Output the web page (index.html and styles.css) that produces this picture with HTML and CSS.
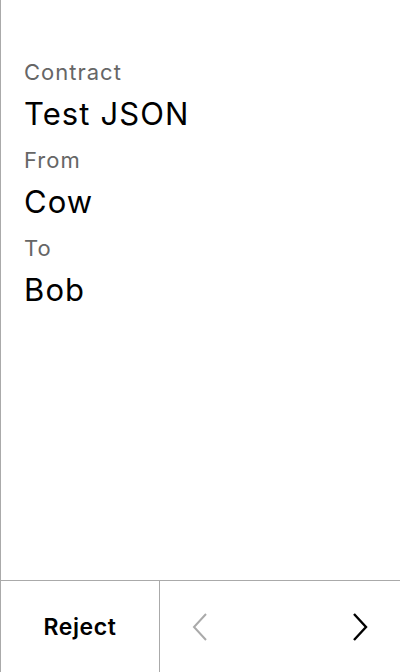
FILE: index.html
```html
<!DOCTYPE html>
<html>
<head>
<meta charset="utf-8">
<link rel="stylesheet" href="styles.css">
</head>
<body>
<div class="screen">
  <main class="details">
    <div class="label">Contract</div>
    <div class="value">Test JSON</div>
    <div class="label">From</div>
    <div class="value">Cow</div>
    <div class="label">To</div>
    <div class="value">Bob</div>
  </main>
  <footer class="actions">
    <button class="reject">Reject</button>
    <div class="nav">
      <button class="nav-btn prev" aria-label="Previous">
        <svg width="16" height="28" viewBox="0 0 16 28"><path d="M14 1 L2 14 L14 27" fill="none" stroke="currentColor" stroke-width="2"/></svg>
      </button>
      <button class="nav-btn next" aria-label="Next">
        <svg width="16" height="28" viewBox="0 0 16 28"><path d="M2 1 L14 14 L2 27" fill="none" stroke="currentColor" stroke-width="2.4"/></svg>
      </button>
    </div>
  </footer>
</div>
</body>
</html>
```
FILE: styles.css
```css
* { box-sizing: border-box; }
html, body { margin: 0; padding: 0; background: #fff; }
body { font-family: Inter, "Noto Sans", sans-serif; }
.screen {
  width: 400px;
  height: 672px;
  display: flex;
  flex-direction: column;
  border-left: 1px solid #aaa;
}
.details {
  flex: 1;
  padding: 60px 23px 0;
}
.label {
  font-size: 22px;
  line-height: 24px;
  letter-spacing: 1px;
  color: #666;
}
.value {
  font-size: 31px;
  line-height: 40px;
  letter-spacing: 1.1px;
  color: #000;
  margin: 10px 0 14px;
}
.actions {
  height: 92px;
  border-top: 1px solid #aaa;
  display: flex;
}
button {
  font-family: inherit;
  background: none;
  border: 0;
  padding: 0;
  margin: 0;
  cursor: pointer;
}
.reject {
  width: 159px;
  border-right: 1px solid #aaa;
  font-size: 23px;
  letter-spacing: 0.6px;
  font-weight: 600;
  color: #000;
}
.nav {
  flex: 1;
  display: flex;
  justify-content: space-between;
}
.nav-btn {
  width: 80px;
  display: flex;
  align-items: center;
  justify-content: center;
}
.prev { color: #aaa; }
.next { color: #000; }
```
